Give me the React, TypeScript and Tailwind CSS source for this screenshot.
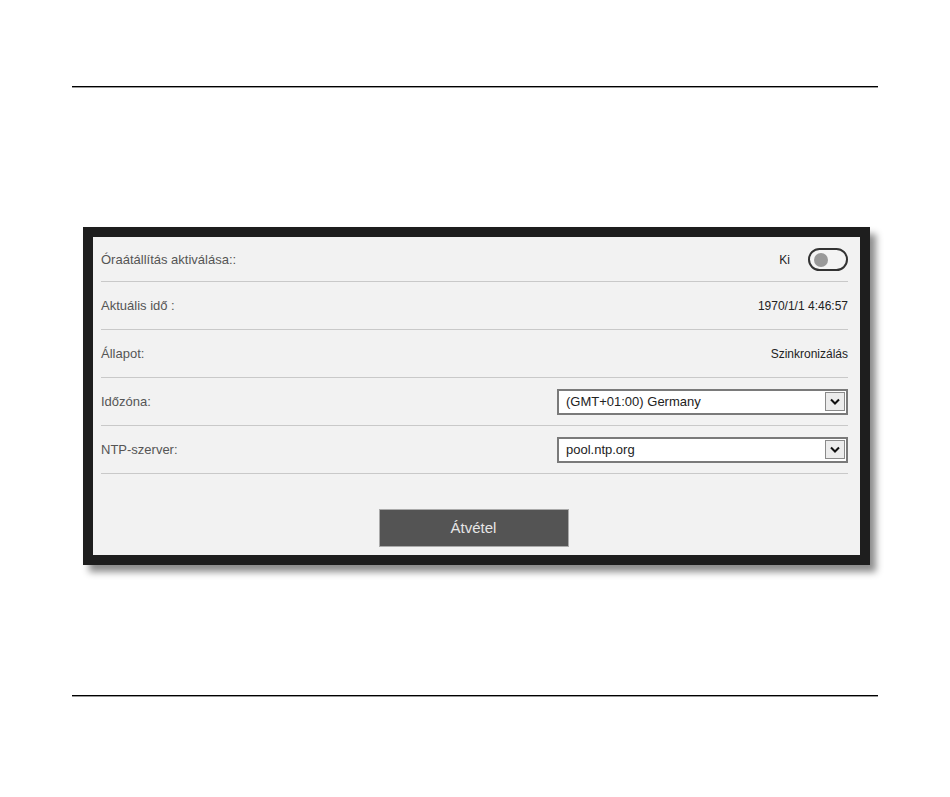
import React from 'react'

const Chevron: React.FC = () => (
  <div className="w-[20px] h-[19px] border border-[#8a8a8a] bg-[#ececec] flex items-center justify-center">
    <svg width="10" height="7" viewBox="0 0 10 7">
      <path d="M1 1.5 L5 5.5 L9 1.5" fill="none" stroke="#111" strokeWidth="2" />
    </svg>
  </div>
)

const Select: React.FC<{ value: string }> = ({ value }) => (
  <div className="w-[291px] h-[26px] border-2 border-[#7a7a7a] bg-white flex items-center justify-between pl-[7px] pr-[1px] ml-[-2px]">
    <span className="text-[13px] text-[#222]">{value}</span>
    <Chevron />
  </div>
)

const Row: React.FC<{ label: string; first?: boolean; children?: React.ReactNode }> = ({ label, first, children }) => (
  <div className={`${first ? 'h-[45px] pt-[1px]' : 'h-[48px]'} flex items-center justify-between border-b border-[#c9c9c9]`}>
    <span className="text-[13px] text-[#555]">{label}</span>
    {children}
  </div>
)

export default function App() {
  return (
    <div className="min-h-screen bg-white pt-[86px] pb-[100px]" style={{ fontFamily: '"Liberation Sans", Arial, sans-serif' }}>
      {/* top rule */}
      <div className="mx-[72px] w-[806px] h-[2px] bg-black border-b border-[#999]" />

      {/* settings panel */}
      <div className="mt-[139px] ml-[83px] w-[787px] h-[338px] border-[10px] border-[#1e1e1e] bg-[#f2f2f2] shadow-[6px_7px_7px_rgba(0,0,0,0.45)]">
        <div className="pl-[8px] pr-[12px]">
          <Row label="Óraátállítás aktiválása::" first>
            <div className="flex items-center gap-[18px]">
              <span className="text-[12px] text-[#222]">Ki</span>
              <div className="w-[40px] h-[23px] rounded-full border-2 border-[#333] bg-[#f4f4f4] flex items-center pl-[4px]">
                <div className="w-[14px] h-[14px] rounded-full bg-[#999]" />
              </div>
            </div>
          </Row>
          <Row label="Aktuális idő :">
            <span className="text-[12px] text-[#222]">1970/1/1 4:46:57</span>
          </Row>
          <Row label="Állapot:">
            <span className="text-[12px] text-[#222]">Szinkronizálás</span>
          </Row>
          <Row label="Időzóna:">
            <Select value="(GMT+01:00) Germany" />
          </Row>
          <Row label="NTP-szerver:">
            <Select value="pool.ntp.org" />
          </Row>
          <div className="flex justify-center pt-[35px]">
            <button className="w-[190px] h-[38px] bg-[#545454] border border-[#aaa] text-[15px] text-[#e6e6e6] ml-[-2px]">
              Átvétel
            </button>
          </div>
        </div>
      </div>

      {/* bottom rule */}
      <div className="mt-[130px] mx-[72px] w-[806px] h-[2px] bg-black border-b border-[#999]" />
    </div>
  )
}
